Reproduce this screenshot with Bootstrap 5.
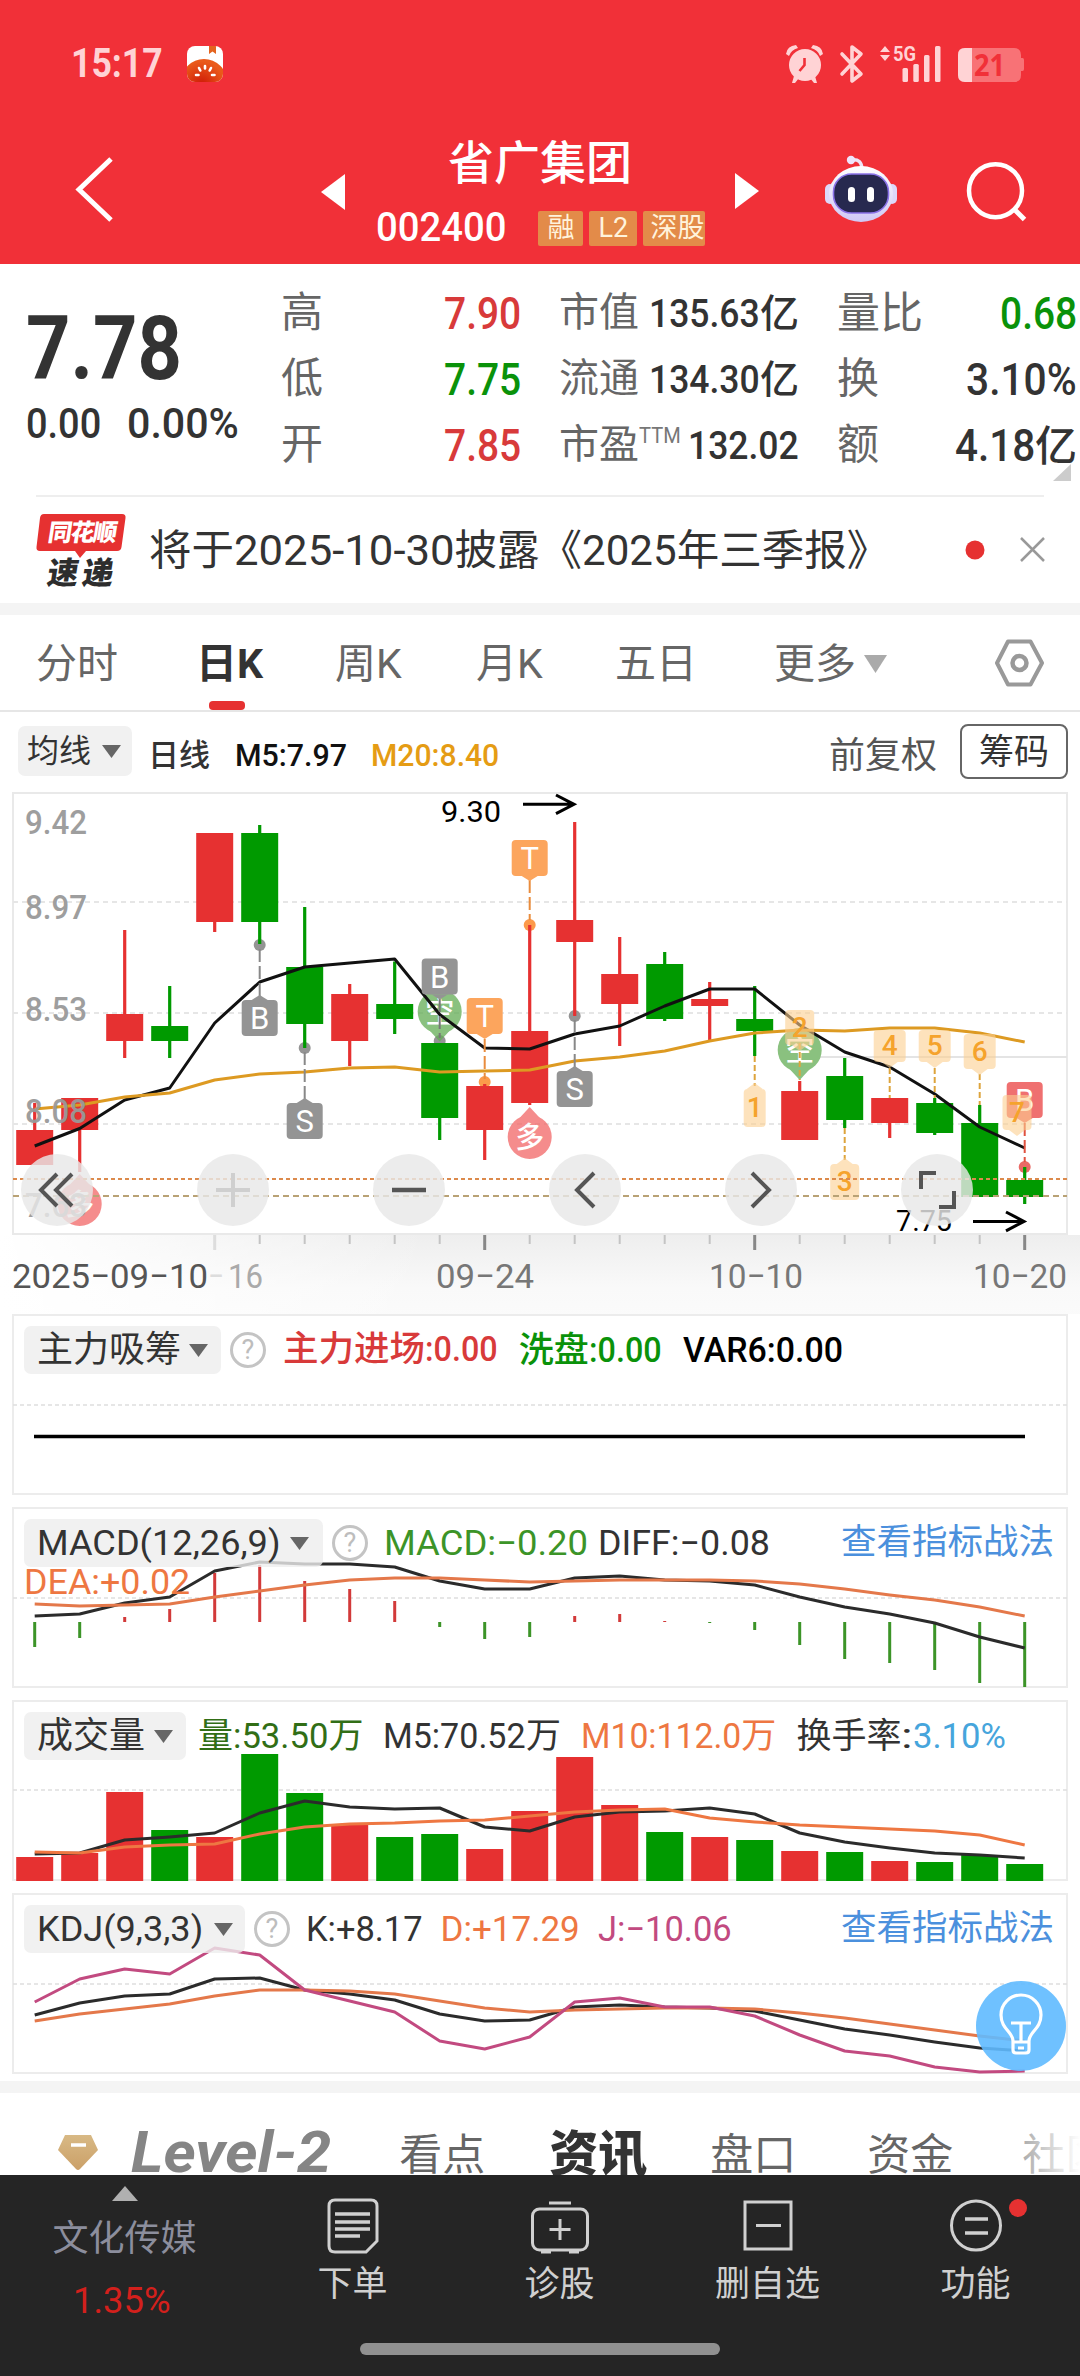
<!DOCTYPE html>
<html lang="zh-CN">
<head>
<meta charset="utf-8">
<meta name="viewport" content="width=device-width, initial-scale=1">
<title>省广集团 002400</title>
<link href="https://cdn.jsdelivr.net/npm/bootstrap@5.3.0/dist/css/bootstrap.min.css" rel="stylesheet">
<style>
  :root { --up:#e63131; --down:#009a00; --ink:#333; --soft:#666; --orange:#ee7742; }
  body { font-family: Roboto, "Noto Sans CJK SC", sans-serif; color: var(--ink); width:1080px; height:2376px; overflow:hidden; line-height:1; background:#fff; }
  svg { display:block; flex:none; }
  .fit { display:inline-block; white-space:nowrap; transform-origin:left center; }
  .nw { white-space:nowrap; }
  /* header */
  .hero { height:264px; background:#f13038; color:#fff; }
  .statusbar { height:84px; padding-top:46px; padding-left:71px; padding-right:55px; }
  .clock { font-size:41px; font-weight:700; color:#ffd3d5; }
  .titlebar { height:180px; }
  .side-l { width:345px; padding-left:74px; padding-top:71px; }
  .stock { width:390px; padding-top:54px; }
  .stock h1 { font-size:46px; font-weight:500; line-height:50px; margin:0 0 20px; text-align:center; }
  .code { font-size:40px; font-weight:500; }
  .flag { height:35px; background:#e38b49; color:#fff3dc; font-size:27px; line-height:34px; border-radius:2px; overflow:hidden; white-space:nowrap; text-align:center; }
  .side-r { width:345px; padding-top:70px; }
  .tri { margin-top:19px; }
  /* quote */
  .quote { height:231px; padding-top:17px; }
  .pricecol { width:281px; padding-left:26px; padding-top:24px; }
  .price { font-size:89px; font-weight:700; line-height:88px; }
  .chg { font-size:43px; font-weight:500; margin-top:9px; }
  .qcol { width:240px; margin-right:38px; }
  .qcol > div { height:66px; }
  .lab { font-size:42px; color:var(--soft); white-space:nowrap; position:relative; top:-1px; }
  .lab39 { font-size:40px; }
  .v44 { font-size:44px; font-weight:500; }
  .v39 { font-size:39px; font-weight:500; }
  .ttm { font-size:22px; color:#777; margin-bottom:20px; }
  .c-up { color:#d83a3a; } .c-down { color:#0a920a; }
  .corner { right:9px; bottom:14px; }
  .notice { height:108px; margin:0 36px; border-top:2px solid #eee; }
  .noticetext { font-size:42.5px; margin-left:21px; width:745px; position:relative; top:1px; }
  .band { height:12px; background:#f4f4f4; }
  /* period tabs */
  .periods { height:97px; border-bottom:2px solid #e6e6e6; font-size:41px; color:var(--soft); padding-left:36px; }
  .periods .cell { height:95px; padding-top:29px; white-space:nowrap; position:relative; line-height:41px; }
  .periods .on { font-weight:700; color:var(--ink); }
  .periods .on::after { content:""; position:absolute; left:13px; bottom:0; width:36px; height:9px; border-radius:4px; background:var(--up); }
  .tools { height:80px; padding:12px 12px 0 18px; font-size:32px; }
  .pick { background:#f1f1f1; border-radius:7px; white-space:nowrap; }
  .pick50 { height:50px; width:114px; padding-left:9px; }
  .chipbtn { width:108px; height:55px; border:2px solid #666; border-radius:8px; font-size:35px; line-height:54px; padding:0; color:#333; text-align:center; }
  /* charts */
  .kline { height:522px; }
  .ctl { width:72px; height:72px; border-radius:50%; background:rgba(232,232,232,.82); top:362px; display:flex; align-items:center; justify-content:center; position:absolute; }
  .panel { margin:0 12px 12px; height:181px; border:2px solid #ececec; position:relative; }
  .panel > svg { position:absolute; left:-14px; top:-1px; }
  .phead { position:relative; padding:10px 12px 0 10px; font-size:35px; font-weight:400; }
  .phead .pick { height:48px; padding-left:13px; background:rgba(238,238,238,.8); }
  .med .fit, .phead b { font-weight:500; }
  .cj { font-size:36px; }
  .help { width:36px; height:36px; border:3px solid #c4c4c4; color:#bdbdbd; border-radius:50%; font-size:27px; line-height:31px; text-align:center; }
  .link { color:#4b90dd; font-size:35.5px; }
  .bulb { left:976px; top:1981px; width:90px; height:90px; border-radius:50%; background:rgba(95,186,255,.9); }
  /* section tabs */
  .sections { height:82px; font-size:43px; color:var(--soft); overflow:hidden; position:relative; }
  .sections .nw { line-height:48px; }
  .lv { font-size:58px; font-weight:700; font-style:italic; color:#858585; line-height:58px; }
  .fade-r { right:0; top:0; width:70px; height:82px; background:linear-gradient(90deg,rgba(255,255,255,.35),#fff); }
  .dock { height:201px; background:#252525; color:#d0d0d0; position:relative; }
  .dock .item { text-align:center; font-size:35px; padding-top:22px; white-space:nowrap; }
  .dock .item svg { margin:0 auto 12px; }
  .homebar { left:360px; bottom:21px; width:360px; height:12px; border-radius:6px; background:#919191; }
</style>
<script src="https://cdn.jsdelivr.net/npm/bootstrap@5.3.0/dist/js/bootstrap.bundle.min.js"></script>
</head>
<body class="d-flex flex-column">

<header class="hero flex-shrink-0">
  <div class="statusbar d-flex justify-content-between align-items-start">
    <div class="d-flex align-items-start">
      <span class="clock"><span class="fit" data-w="92" style="position:relative;top:-3px">15:17</span></span>
      <svg class="ms-4" width="36" height="36" viewBox="0 0 36 36"><defs><clipPath id="ic"><rect width="36" height="36" rx="8"/></clipPath><radialGradient id="tg" cx=".45" cy=".55" r=".5"><stop offset="0" stop-color="#cf1a06"/><stop offset="1" stop-color="#ea5a1a"/></radialGradient></defs><g clip-path="url(#ic)"><rect width="36" height="36" fill="#fff"/><circle cx="17" cy="36" r="23" fill="url(#tg)"/><path d="M22 0h7v8l-3.500-2.500L22 8z" fill="#e4641f"/><g stroke="#fff" stroke-width="2.600" stroke-linecap="round"><path d="M18 20v2.500M12 22l1.300 2.500M24 22l-1.300 2.500M9 29h2.500M25 29h2.500"/></g></g></svg>
    </div>
    <svg width="240" height="40" viewBox="784 46 240 40" fill="#ffd3d5" overflow="visible">
      <circle cx="804" cy="65" r="16"/><path d="M785 54q1-8 10-9l2 3q-7 2-9 8zM822 54q-1-8-10-9l-2 3q7 2 9 8z"/><path d="M793 76l-2 7h3l4-5zM814 76l2 7h-3l-4-5z"/><path d="M803.500 58v7l-5 6" fill="none" stroke="#f13038" stroke-width="2.600"/>
      <path d="M841 54l19 20-9 7V47l9 7-19 20" fill="none" stroke="#ffd3d5" stroke-width="3.600" stroke-linejoin="round" stroke-linecap="round"/>
      <path d="M879 52l5-6 5 6zM879 55h10l-5 6z"/>
      <text x="892" y="61" font-size="20" font-weight="700" textLength="23" lengthAdjust="spacingAndGlyphs">5G</text>
      <rect x="901.500" y="68" width="5.500" height="14" rx="1.500"/><rect x="912.300" y="64" width="5.500" height="18" rx="1.500"/><rect x="923" y="55" width="5.500" height="27" rx="1.500"/><rect x="934" y="46" width="5.500" height="36" rx="1.500"/>
      <path d="M964 48h49q7 0 7 7v3h1.500q1.500 0 1.500 2v9q0 2-1.500 2H1020v4q0 7-7 7h-49q-7 0-7-7V55q0-7 7-7z" fill="#f87276"/><path d="M971 48v34h-7q-7 0-7-7V55q0-7 7-7z"/>
      <text x="973" y="76" font-size="30" font-weight="700" fill="#f13038" font-family="Open Sans" textLength="31" lengthAdjust="spacingAndGlyphs">21</text>
    </svg>
  </div>
  <div class="titlebar d-flex">
    <div class="side-l d-flex justify-content-between">
      <svg width="42" height="68" viewBox="74 155 42 68"><path d="M111 159L79 189.500 111 220" fill="none" stroke="#fff" stroke-width="5"/></svg>
      <svg width="24" height="36" class="tri"><path d="M24 0v36L0 18z" fill="#fff"/></svg>
    </div>
    <div class="stock">
      <h1>省广集团</h1>
      <div class="d-flex align-items-center" style="padding-left:31px">
        <span class="code"><span class="fit" data-w="130">002400</span></span>
        <span class="flag" style="width:45px;margin-left:32px">融</span>
        <span class="flag" style="width:48px;margin-left:6px">L2</span>
        <span class="flag" style="width:62px;margin-left:6px;text-indent:7px;text-align:left">深股</span>
      </div>
    </div>
    <div class="side-r d-flex">
      <svg width="24" height="36" class="tri"><path d="M0 0v36l24-18z" fill="#fff"/></svg>
      <svg width="76" height="70" viewBox="823 154 76 70" style="margin-left:64px"><defs><linearGradient id="rb" x1="0" y1="0" x2="0" y2="1"><stop offset="0" stop-color="#fff"/><stop offset="1" stop-color="#cfc8f5"/></linearGradient></defs>
        <path d="M851 160q11-2 11 10" fill="none" stroke="#efe4f6" stroke-width="3.500"/><circle cx="851" cy="160" r="4.200" fill="#eee4fb"/>
        <rect x="825" y="184" width="10" height="20" rx="5" fill="#ddd8fa"/><rect x="887" y="184" width="10" height="20" rx="5" fill="#ddd8fa"/>
        <ellipse cx="861" cy="194" rx="32" ry="28" fill="url(#rb)"/><rect x="833.500" y="174" width="55" height="39" rx="18" fill="#27294f" stroke="#8a72e8" stroke-width="1.600"/><rect x="848" y="187" width="7" height="15" rx="3.500" fill="#fff"/><rect x="867" y="187" width="7" height="15" rx="3.500" fill="#fff"/></svg>
      <svg width="64" height="64" viewBox="964 160 64 64" style="margin-left:66px;margin-top:6px"><circle cx="994.500" cy="190.700" r="26.500" fill="none" stroke="#fff" stroke-width="4.500"/><path d="M1013 209l10.500 10.500" stroke="#fff" stroke-width="5"/></svg>
    </div>
  </div>
</header>

<section class="quote d-flex flex-shrink-0 position-relative">
  <div class="pricecol">
    <div class="price"><span class="fit" data-w="156">7.78</span></div>
    <div class="chg"><span class="fit" data-w="75">0.00</span><span class="fit" data-w="112" style="margin-left:26px">0.00%</span></div>
  </div>
  <div class="qcol">
    <div class="d-flex align-items-center justify-content-between"><span class="lab">高</span><span class="v44 c-up"><span class="fit" data-w="77">7.90</span></span></div>
    <div class="d-flex align-items-center justify-content-between"><span class="lab">低</span><span class="v44 c-down"><span class="fit" data-w="77">7.75</span></span></div>
    <div class="d-flex align-items-center justify-content-between"><span class="lab">开</span><span class="v44 c-up"><span class="fit" data-w="77">7.85</span></span></div>
  </div>
  <div class="qcol">
    <div class="d-flex align-items-center justify-content-between"><span class="lab lab39">市值</span><span class="v39 nw"><span class="fit" data-w="111">135.63</span>亿</span></div>
    <div class="d-flex align-items-center justify-content-between"><span class="lab lab39">流通</span><span class="v39 nw"><span class="fit" data-w="111">134.30</span>亿</span></div>
    <div class="d-flex align-items-center"><span class="lab lab39">市盈</span><span class="ttm"><span class="fit" data-w="42">TTM</span></span><span class="v39 nw ms-auto"><span class="fit" data-w="111">132.02</span></span></div>
  </div>
  <div class="qcol me-0">
    <div class="d-flex align-items-center justify-content-between"><span class="lab" style="font-size:43px">量比</span><span class="v44 c-down"><span class="fit" data-w="77">0.68</span></span></div>
    <div class="d-flex align-items-center justify-content-between"><span class="lab">换</span><span class="v44"><span class="fit" data-w="111">3.10%</span></span></div>
    <div class="d-flex align-items-center justify-content-between"><span class="lab">额</span><span class="v44 nw"><span class="fit" data-w="80">4.18</span><span style="font-size:42px">亿</span></span></div>
  </div>
  <svg class="corner position-absolute" width="18" height="17"><path d="M18 0v17H0z" fill="#ccc"/></svg>
</section>

<section class="notice d-flex align-items-center flex-shrink-0">
  <svg width="92" height="76" viewBox="36 511 92 76"><path d="M44 513h78q4 0 3.500 4l-4 29q-.5 4-4.500 4H86l-6 7-5-7H40q-4 0-3.500-4l3.500-29q.5-4 4-4z" fill="#e63131"/>
    <g font-family="Noto Sans CJK SC" font-weight="900"><text transform="translate(47 540) skewX(-9)" font-size="24" fill="#fff" textLength="69">同花顺</text><text transform="translate(46 583) skewX(-9)" font-size="31" fill="#2d2d2d" textLength="66">速递</text></g></svg>
  <div class="noticetext nw">将于<span class="fit" data-w="221">2025-10-30</span>披露《<span class="fit" data-w="95">2025</span>年三季报》</div>
  <svg class="ms-auto" width="84" height="26" viewBox="0 0 84 26" style="margin-right:-1px"><circle cx="14" cy="13" r="9.500" fill="#e63131"/><path d="M60 1l23 23M83 1L60 24" stroke="#999" stroke-width="2.500"/></svg>
</section>
<div class="band flex-shrink-0"></div>

<nav class="periods d-flex flex-shrink-0">
  <div class="cell" style="width:160px">分时</div>
  <div class="cell on" style="width:139px">日K</div>
  <div class="cell" style="width:141px">周K</div>
  <div class="cell" style="width:139px">月K</div>
  <div class="cell" style="width:159px">五日</div>
  <div class="cell" style="width:220px">更多<svg class="d-inline-block ms-2" width="23" height="18" style="margin-bottom:6px"><path d="M0 0h23L11.500 18z" fill="#aaa"/></svg></div>
  <svg width="52" height="50" viewBox="0 0 52 50" style="margin-top:23px"><path d="M14 3.500h22.500L48 25 36.500 46.500H14L3 25z" fill="none" stroke="#999" stroke-width="4" stroke-linejoin="round"/><circle cx="25.500" cy="25" r="7" fill="none" stroke="#999" stroke-width="4.500"/></svg>
</nav>

<div class="tools d-flex align-items-start flex-shrink-0">
  <div class="pick pick50 d-flex align-items-center" style="margin-top:2px">均线<svg width="19" height="13" style="margin-left:11px"><path d="M0 0h19L9.500 13z" fill="#666"/></svg></div>
  <div class="d-flex align-items-center" style="height:62px;margin-left:16px"><span style="font-size:31px;font-weight:500">日线</span><span class="fit" data-w="112" style="margin-left:25px;font-weight:500;color:#111">M5:7.97</span><span class="fit" data-w="128" style="margin-left:24px;font-weight:500;color:#e59c14">M20:8.40</span></div>
  <div class="ms-auto d-flex"><span style="font-size:36px;color:#555;line-height:64px;height:60px;margin-right:23px">前复权</span><span class="chipbtn">筹码</span></div>
</div>

<section class="kline position-relative flex-shrink-0">
  <svg id="k" width="1080" height="522" viewBox="0 12 1080 522"></svg>
  <div class="ctl" style="left:21px"><svg width="40" height="40" viewBox="0 0 40 40" fill="none" stroke="#555" stroke-width="4"><path d="M20 4L4 20l16 16M35 4L19 20l16 16"/></svg></div>
  <div class="ctl" style="left:197px"><svg width="36" height="36" stroke="#cfcfcf" stroke-width="4"><path d="M18 1v34M1 18h34"/></svg></div>
  <div class="ctl" style="left:373px"><svg width="34" height="36" stroke="#555" stroke-width="4.500"><path d="M0 18h34"/></svg></div>
  <div class="ctl" style="left:549px"><svg width="24" height="38" viewBox="0 0 24 38" fill="none" stroke="#555" stroke-width="4"><path d="M21 2L4 19l17 17"/></svg></div>
  <div class="ctl" style="left:725px"><svg width="24" height="38" viewBox="0 0 24 38" fill="none" stroke="#555" stroke-width="4"><path d="M3 2l17 17L3 36"/></svg></div>
  <div class="ctl" style="left:901px"><svg width="37" height="38" viewBox="0 0 37 38" fill="none" stroke="#555" stroke-width="4"><path d="M17 2H2v16M20 36h15V20"/></svg></div>
</section>

<section class="panel flex-shrink-0">
  <svg id="p1" width="1080" height="181"></svg>
  <div class="phead med d-flex align-items-center"><span class="pick d-flex align-items-center" style="width:197px"><span class="cj">主力吸筹</span><svg style="margin-left:8px" width="19" height="13"><path d="M0 0h19L9.500 13z" fill="#666"/></svg></span>
    <span class="help" style="margin-left:9px">?</span>
    <span class="c-up nw" style="margin-left:17px"><b style="font-size:35.5px">主力进场</b><span class="fit" data-w="73">:0.00</span></span><span class="c-down nw" style="margin-left:21px"><b>洗盘</b><span class="fit" data-w="73">:0.00</span></span><span class="fit" data-w="160" style="margin-left:22px;color:#000">VAR6:0.00</span></div>
</section>
<section class="panel flex-shrink-0">
  <svg id="p2" width="1080" height="181"></svg>
  <div class="phead d-flex align-items-center"><span class="pick d-flex align-items-center" style="width:299px"><span class="fit" data-w="244">MACD(12,26,9)</span><svg style="margin-left:9px" width="19" height="13"><path d="M0 0h19L9.500 13z" fill="#666"/></svg></span>
    <span class="help" style="margin-left:9px">?</span>
    <span class="fit" data-w="204" style="margin-left:16px;color:#3c9428">MACD:−0.20</span><span class="fit" data-w="172" style="margin-left:10px">DIFF:−0.08</span><span class="link nw ms-auto">查看指标战法</span></div>
  <div class="phead pt-0" style="margin-top:-2px;color:var(--orange)"><span class="fit" data-w="166">DEA:+0.02</span></div>
</section>
<section class="panel flex-shrink-0">
  <svg id="p3" width="1080" height="181"></svg>
  <div class="phead d-flex align-items-center"><span class="pick d-flex align-items-center" style="width:162px"><span class="cj">成交量</span><svg style="margin-left:9px" width="19" height="13"><path d="M0 0h19L9.500 13z" fill="#666"/></svg></span>
    <span class="nw" style="margin-left:12px;color:#316e16">量<span class="fit" data-w="95">:53.50</span>万</span><span class="nw" style="margin-left:20px"><span class="fit" data-w="143">M5:70.52</span>万</span><span class="nw" style="margin-left:20px;color:var(--orange)"><span class="fit" data-w="160">M10:112.0</span>万</span><span class="nw" style="margin-left:20px">换手率<span class="fit" data-w="11">:</span><span class="fit" data-w="93" style="color:#46a5dc">3.10%</span></span></div>
</section>
<section class="panel flex-shrink-0" style="margin-bottom:7px">
  <svg id="p4" width="1080" height="181"></svg>
  <div class="phead d-flex align-items-center"><span class="pick d-flex align-items-center" style="width:221px"><span class="fit" data-w="166">KDJ(9,3,3)</span><svg style="margin-left:11px" width="19" height="13"><path d="M0 0h19L9.500 13z" fill="#666"/></svg></span>
    <span class="help" style="margin-left:9px">?</span>
    <span class="fit" data-w="117" style="margin-left:16px">K:+8.17</span><span class="fit" data-w="139" style="margin-left:18px;color:var(--orange)">D:+17.29</span><span class="fit" data-w="134" style="margin-left:18px;color:#c24a80">J:−10.06</span><span class="link nw ms-auto">查看指标战法</span></div>
</section>
<div class="band flex-shrink-0"></div>

<nav class="sections d-flex flex-shrink-0">
  <svg width="42" height="38" viewBox="0 0 42 38" style="margin-left:57px;margin-top:42px"><defs><linearGradient id="gm" x1="0" y1="0" x2="0" y2="1"><stop offset="0" stop-color="#d8b985"/><stop offset="1" stop-color="#cba068"/></linearGradient></defs><path d="M8 0h26l7 15-18 19q-2 2-4 0L1 15z" fill="url(#gm)"/><path d="M14 10h15" stroke="#fff" stroke-width="3.500"/></svg>
  <span class="lv" style="margin-left:32px;margin-top:30px"><span class="fit" data-w="200">Level-2</span></span>
  <span class="nw" style="margin-left:68px;margin-top:38px">看点</span>
  <span class="nw" style="margin-left:64px;margin-top:38px;font-size:49px;font-weight:900;color:#333">资讯</span>
  <span class="nw" style="margin-left:63px;margin-top:38px">盘口</span>
  <span class="nw" style="margin-left:71px;margin-top:38px">资金</span>
  <span class="nw" style="margin-left:69px;margin-top:38px">社区</span>
  <div class="fade-r position-absolute"></div>
</nav>

<footer class="dock d-flex flex-shrink-0">
  <div style="width:249px;padding-top:11px;text-align:center">
    <svg class="mx-auto" width="26" height="15"><path d="M13 0l13 15H0z" fill="#b0b0b0"/></svg>
    <div style="font-size:36px;color:#8c8e9d;margin-top:20px">文化传媒</div>
    <div style="font-size:36px;color:#d3201c;margin-top:26px;padding-right:5px"><span class="fit" data-w="98">1.35%</span></div>
  </div>
  <div class="item" style="width:207px"><svg width="54" height="58" viewBox="0 0 54 58" fill="none" stroke="#d0d0d0" stroke-width="3"><path d="M9 3h36q6 0 6 6v35l-11 11H9q-6 0-6-6V9q0-6 6-6z"/><path d="M9 17h35M9 25h35M9 32h35M9 39h25" stroke-width="3.500"/></svg>下单</div>
  <div class="item" style="width:207px"><svg width="60" height="58" viewBox="0 0 60 58" fill="none" stroke="#d0d0d0" stroke-width="3"><rect x="2.500" y="12" width="55" height="41" rx="7"/><path d="M19 6h22M30 22v21M19.500 32.500h21M11 55h10M39 55h10" /></svg>诊股</div>
  <div class="item" style="width:209px"><svg width="52" height="58" viewBox="0 0 52 58" fill="none" stroke="#d0d0d0" stroke-width="3"><rect x="3" y="5" width="46" height="47"/><path d="M14 28.500h25"/></svg>删自选</div>
  <div class="item" style="width:207px"><svg width="54" height="58" viewBox="0 0 54 58" fill="none" stroke="#d0d0d0" stroke-width="3" overflow="visible"><circle cx="27" cy="28.500" r="24.500"/><path d="M16 22h23M16 36h23" stroke-width="3.500"/><circle cx="69" cy="11" r="9" fill="#e63131" stroke="none"/></svg>功能</div>
  <div class="homebar position-absolute"></div>
</footer>

<div class="bulb position-absolute"><svg width="90" height="90" viewBox="0 0 90 90" fill="none" stroke="#fff" stroke-width="3.200"><path d="M37 60c0-9-12-12-12-26a20 20 0 0 1 40 0c0 14-12 17-12 26v9q0 3-3 3H40q-3 0-3-3z"/><path d="M35 42h20M45 42v19M37 61h16M42 67h6"/></svg></div>

<script>
const X = i => 34.7 + 45 * i, UP = '#e63131', DN = '#009a00';
const line = (a, c, w = 3) => `<polyline fill="none" stroke="${c}" stroke-width="${w}" stroke-linejoin="round" points="${a.map((y, i) => X(i) + ',' + y).join(' ')}"/>`;
const txt = (x, y, s, w, size, c, extra = '') => `<text x="${x}" y="${y}" font-size="${size}" fill="${c}" textLength="${w}" lengthAdjust="spacingAndGlyphs" ${extra}>${s}</text>`;

/* candles: high, open/close top, open/close bottom, low, direction */
const C = [[323,350,385,385,1],[318,318,350,392,1],[150,234,261,278,1],[206,246,261,278,0],[53,53,142,152,1],[45,53,142,164,0],[127,187,244,268,0],[204,214,261,286,1],[181.5,224,239,254,0],[263,263,338,360,0],[304,306,350,380,1],[145,251,323,325,1],[42,140,162,236,1],[157,194,224,266,1],[172,184,239,241,0],[202,219,226,260,1],[206,239,251,276,0],[301,311,360,360,1],[278,296,340,348,0],[318,318,343,358,1],[318,323,353,355,0],[325,343,417,417,0],[387,400,417,424,0]];
const M5 = [366,348.5,320,308,243,202,187,183,179,234.5,268,269,254,246,226,209,209,245,272,287,314,347,368];
const M20 = [329,325,317,313,300,294,292,288,287,292,291,290,281,277,271,261,253,250,251,248,248,253,262];
const box = (i, y, ch, c, down) => `<rect x="${X(i)-18}" y="${y}" width="36" height="36" rx="4" fill="${c}"/><path d="${down ? `M${X(i)-8} ${y+36}h16l-8 5z` : `M${X(i)-8} ${y}h16l-8 -5z`}" fill="${c}"/><text x="${X(i)}" y="${y+29}" font-size="31" fill="#fff" text-anchor="middle">${ch}</text>`;
const dash = (i, a, b, c, w = 2, d = '13 4') => `<path d="M${X(i)} ${a}V${b}" stroke="${c}" stroke-width="${w}" stroke-dasharray="${d}"/>`;
const dot = (i, y, c) => `<circle cx="${X(i)}" cy="${y}" r="6" fill="${c}"/>`;
const pin = (i, y, ch, c, down) => `<g opacity=".75"><circle cx="${X(i)}" cy="${y}" r="22" fill="${c}"/><path d="${down ? `M${X(i)-12} ${y+17}h24l-12 13z` : `M${X(i)-12} ${y-17}h24l-12 -13z`}" fill="${c}"/><text x="${X(i)}" y="${y+11}" font-size="29" fill="#fff" font-weight="500" text-anchor="middle">${ch}</text></g>`;
const tag = (x, y, w, h, ch, down) => `<g><path d="${down ? `M${x-8} ${y+h}h16l-8 6z` : `M${x-8} ${y}h16l-8 -6z`}" fill="#fcce90" opacity=".6"/><rect x="${x-w/2}" y="${y}" width="${w}" height="${h}" rx="4" fill="#fcce90" opacity=".6"/><text x="${x}" y="${y+h/2+9}" font-size="28" fill="#f5a32c" font-weight="500" text-anchor="middle">${ch}</text></g>`;
let k = `<defs><linearGradient id="sh" x1="0" y1="0" x2="0" y2="1"><stop offset="0" stop-color="#eee"/><stop offset=".6" stop-color="#f9f9f9"/><stop offset="1" stop-color="#fbfbfb"/></linearGradient><linearGradient id="shl"><stop offset="0" stop-color="#fff"/><stop offset="1" stop-color="#fff" stop-opacity="0"/></linearGradient></defs>
<rect y="455" width="1080" height="88" fill="url(#sh)"/><rect y="455" width="430" height="88" fill="url(#shl)"/>
<rect x="13" y="13" width="1054" height="441" fill="#fff" stroke="#e9e9e9" stroke-width="2"/>`;
[122,233,344].forEach(y => k += `<path d="M13 ${y}H1067" stroke="#e6e6e6" stroke-width="2" stroke-dasharray="5 4"/>`);
k += `<path d="M820 277H1067" stroke="#e4e4e4" stroke-width="2"/>`;
k += dot(5,165,'#949494') + dot(6,268,'#949494') + dot(9,261,'#949494') + dot(12,236,'#949494') + dot(10,302,'#fc9a4a') + dot(11,145,'#fc9a4a') + dot(22,387,'#ea6a66');
C.forEach((c, i) => { const f = c[4] ? UP : DN; k += `<rect x="${X(i)-1.6}" y="${c[0]}" width="3.2" height="${c[3]-c[0]}" fill="${f}"/><rect x="${X(i)-18.5}" y="${c[1]}" width="37" height="${c[2]-c[1]}" fill="${f}"/>`; });
k += pin(9,231.5,'空','#63ad55',1) + pin(17,270,'空','#63ad55',1) + pin(11,357,'多','#f26666',0) + pin(1,424,'多','#f26666',0);
k += line(M5,'#111') + line(M20,'#dd9a22');
k += dash(5,169,216,'#888') + box(5,220,'B','#949494',0) + dash(6,272,319,'#888') + box(6,323,'S','#949494',0) + dash(12,240,287,'#888') + box(12,291,'S','#949494',0);
k += dash(9,219,258,'#777') + box(9,178.5,'B','#949494',1) + dash(10,259,299,'#e98c3d') + box(10,218,'T','#fca55d',1) + dash(11,100,140,'#e98c3d') + box(11,60,'T','#fca55d',1);
const Y='#dda43c';
k += dash(16,276,306,Y,2,'6 3') + tag(X(16),309,22,38,'1',0) + dash(17,263,300,Y,2,'6 3') + tag(X(17),230,29,35,'2',1) + dash(18,348,380,Y,2,'6 3') + tag(X(18),384,29,36,'3',0)
  + dash(19,288,318,Y,2,'6 3') + tag(X(19),250,32,32,'4',1) + dash(20,288,318,Y,2,'6 3') + tag(X(20),250,32,32,'5',1) + dash(21,294,325,Y,2,'6 3') + tag(X(21),254,32,35,'6',1);
k += dash(22,343,382,'#e0523f') + box(22,302,'B','#ef7070',1) + tag(1017,315,29,35,'7',1);
k += `<path d="M13 399H1067" stroke="#dc8a4c" stroke-width="2" stroke-dasharray="4 3"/><path d="M13 416H1067" stroke="#b9a275" stroke-width="2" stroke-dasharray="6 4"/>`;
[['9.42',53.5],['8.97',138.5],['8.53',240.5],['8.08',343],['7.63',436.500]].forEach(a => k += txt(25,a[1],a[0],62,34,'#999','font-weight="500" opacity=".95"'));
k += txt(441,42,'9.30',60,30,'#000') + txt(896,451,'7.75',56,30,'#000');
k += `<g fill="none" stroke="#000" stroke-width="3"><path d="M523 24.300H574M556 15l18 9.300-18 9.300M973 441.400H1023M1006 432l18 9.400-18 9.400"/></g>`;
for (let i = 4; i < 23; i++) { const big = (i - 4) % 6 == 0; k += `<path d="M${X(i)} 455V${big ? 470 : 464}" stroke="${i == 4 ? '#ddd' : big ? '#888' : '#c4c4c4'}" stroke-width="${big ? 3 : 2}"/>`; }
k += txt(12,508,'2025−09−10',196,34,'#555') + txt(208,508,'−',16,34,'#ddd') + txt(228,508,'16',35,34,'#aaa') + txt(436,508,'09−24',98,34,'#777') + txt(709,508,'10−10',94,34,'#777') + txt(973,508,'10−20',94,34,'#777');
document.getElementById('k').innerHTML = k;

const mid = y => `<path d="M13 ${y}H1067" stroke="#dedede" stroke-width="1.500" stroke-dasharray="4 3"/>`;
p1.innerHTML = mid(90) + `<path d="M34 121.500H1025" stroke="#000" stroke-width="3.500"/>`;
const hist = [[139,0],[130,0],[109,1],[101,1],[65,1],[57,1],[73,1],[81,1],[93,1],[119,0],[131,0],[129,0],[108,1],[106,1],[113,1],[115,0],[122,0],[137,0],[151,0],[155,0],[162,0],[175,0],[179,0]];
p2.innerHTML = mid(90) + hist.map((h, i) => `<path d="M${X(i)} 114V${h[0]}" stroke="${h[1] ? '#d23a3a' : '#3c9428'}" stroke-width="3"/>`).join('')
  + line([108,106,95,89,63,54,56,56,59,73,81,81,70,68,72,73,77,89,99,106,115,129,140],'#2b2b2b') + line([96,98,97,96,89,83,77,72,70,70,72,74,73,72,72,72,73,76,81,87,92,99,108],'#e4784a');
const vol = [156,152,91,129,136,53,92,124,136,133,148,110,56,104,131,136,139,150,151,160,161,154,163], vd = '11101001001111010101000';
p3.innerHTML = mid(89) + vol.map((v, i) => `<rect x="${X(i)-18.5}" y="${v}" width="37" height="${180-v}" fill="${vd[i] == '1' ? UP : DN}"/>`).join('')
  + line([153,152,139,136,132,112,100,106,108,107,126,130,116,111,110,107,113,132,141,147,152,154,157],'#2b2b2b') + line([151,152,146,144,143,133,126,123,122,120,119,115,111,109,108,117,121,124,126,128,130,134,144],'#ee7742');
p4.innerHTML = mid(90) + line([121,109,102,100,85,84,96,100,106,120,127,126,113,111,113,114,117,126,135,141,148,154,157],'#2b2b2b') + line([127,120,115,110,102,96,96,97,100,107,114,118,116,115,114,114,115,119,124,130,136,142,147],'#e4784a') + line([108,85,75,80,54,61,96,107,118,147,155,143,108,104,113,113,122,141,157,162,173,178,177],'#c24a80');

/* condense figures to the column width given in data-w */
document.querySelectorAll('.fit').forEach(e => { const w = e.offsetWidth, t = +e.dataset.w; e.style.transform = `scaleX(${t / w})`; e.style.marginRight = (t - w) + 'px'; });
</script>
</body>
</html>
